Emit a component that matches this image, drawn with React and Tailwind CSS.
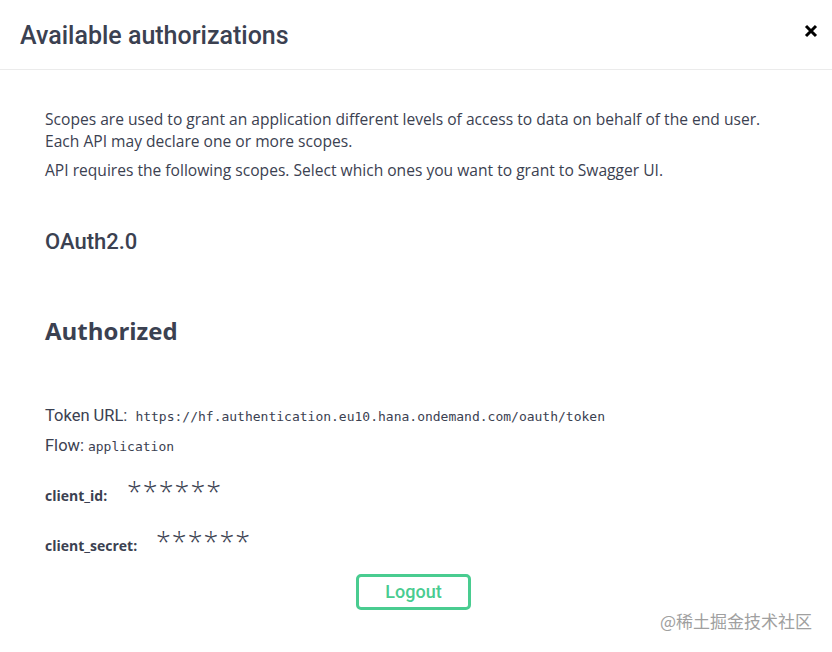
import React from 'react';

const head = { fontFamily: 'Roboto, "Open Sans", sans-serif' };
const body = { fontFamily: '"Open Sans", sans-serif' };
const mono = { fontFamily: '"DejaVu Sans Mono", "Liberation Mono", monospace' };

export default function App() {
  return (
    <div className="w-[832px] h-[652px] bg-white text-[#3b4151] relative overflow-hidden">
      {/* Header */}
      <div className="h-[70px] flex items-center justify-between pl-5 pr-[14px] border-b border-[#ebebeb]">
        <h3 className="text-[25px] font-medium pt-[2px]" style={head}>Available authorizations</h3>
        <button className="mb-[8px]">
          <svg width="14" height="14" viewBox="0 0 14 14">
            <path d="M2 2 L12 12 M12 2 L2 12" stroke="#000" strokeWidth="3" />
          </svg>
        </button>
      </div>

      {/* Body */}
      <div className="px-[45px] pt-[38px]" style={body}>
        <p className="text-[15.6px] leading-[22px]">
          Scopes are used to grant an application different levels of access to data on behalf of the end user.
          <br />
          Each API may declare one or more scopes.
        </p>
        <p className="text-[15.6px] leading-[22px] mt-[7px]">
          API requires the following scopes. Select which ones you want to grant to Swagger UI.
        </p>

        <h4 className="text-[22px] font-medium mt-[44px]" style={head}>OAuth2.0</h4>

        <h2 className="text-[24px] font-bold mt-[55px]">Authorized</h2>

        <div className="mt-[55px] flex flex-col gap-[5px]">
          <p className="text-[16.5px] flex items-baseline" style={head}>
            <span>Token URL:</span>
            <code className="text-[13px] ml-2" style={mono}>https://hf.authentication.eu10.hana.ondemand.com/oauth/token</code>
          </p>
          <p className="text-[16.5px] flex items-baseline" style={head}>
            <span>Flow:</span>
            <code className="text-[13px] ml-1" style={mono}>application</code>
          </p>
        </div>

        <div className="mt-[16px] flex items-center h-[34px]">
          <label className="text-[14px] font-bold w-[82px] pt-[8px]">client_id:</label>
          <span className="text-[27px] leading-none tracking-[1px] font-light">******</span>
        </div>
        <div className="mt-[16px] flex items-center h-[34px]">
          <label className="text-[14px] font-bold w-[111px] pt-[8px]">client_secret:</label>
          <span className="text-[27px] leading-none tracking-[1px] font-light">******</span>
        </div>

        <div className="flex justify-center mt-[15px] pr-[5px]">
          <button
            className="w-[115px] h-[36px] border-[3px] border-[#49cc90] rounded-[5px] text-[#49cc90] text-[18px] font-medium"
            style={head}
          >
            Logout
          </button>
        </div>
      </div>

      <div
        className="absolute right-[20px] bottom-[19px] text-[17px] text-[#a0a0a0]"
        style={{ fontFamily: '"Noto Sans CJK SC", sans-serif' }}
      >
        @稀土掘金技术社区
      </div>
    </div>
  );
}
